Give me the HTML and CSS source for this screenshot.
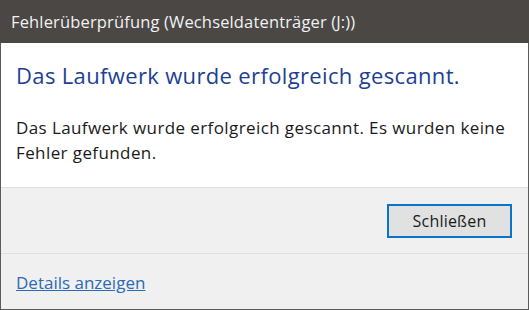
FILE: index.html
```html
<!DOCTYPE html>
<html lang="de">
<head>
<meta charset="utf-8">
<title>Fehlerüberprüfung</title>
<link rel="stylesheet" href="styles.css">
</head>
<body>
<div class="window">
  <div class="titlebar">Fehlerüberprüfung (Wechseldatenträger (J:))</div>
  <div class="content">
    <div class="instruction">Das Laufwerk wurde erfolgreich gescannt.</div>
    <div class="message">Das Laufwerk wurde erfolgreich gescannt. Es wurden keine Fehler gefunden.</div>
  </div>
  <div class="buttons">
    <button class="btn">Schließen</button>
  </div>
  <div class="footer">
    <a class="link" href="#">Details anzeigen</a>
  </div>
</div>
</body>
</html>
```
FILE: styles.css
```css
html, body {
  margin: 0;
  padding: 0;
  background: #f0f0f0;
}
body {
  font-family: "Open Sans", "Noto Sans", "Liberation Sans", sans-serif;
}
.window {
  width: 529px;
  height: 310px;
  box-sizing: border-box;
  border: 1px solid #5b5b5b;
  border-top: none;
  display: flex;
  flex-direction: column;
  background: #f0f0f0;
}
.titlebar {
  height: 43px;
  background: #4a4745;
  color: #f2f2f2;
  font-size: 16.5px;
  line-height: 43px;
  padding-left: 11px;
  margin: 0 -1px;
  letter-spacing: 0.15px;
}
.content {
  background: #ffffff;
  height: 144px;
  padding: 0 8px 0 15px;
  border-bottom: 1px solid #dfdfdf;
}
.instruction {
  color: #1c3f94;
  font-size: 22px;
  margin-top: 17px;
  line-height: 30px;
  letter-spacing: 0.35px;
}
.message {
  color: #1a1a1a;
  font-size: 17px;
  line-height: 25px;
  margin-top: 25px;
  letter-spacing: 0.4px;
}
.buttons {
  height: 66px;
  display: flex;
  justify-content: flex-end;
  align-items: flex-start;
  padding: 16px 16px 0 0;
  box-sizing: border-box;
  border-bottom: 1px solid #dfdfdf;
}
.btn {
  width: 125px;
  height: 34px;
  border: 2px solid #0a74c9;
  background: #e1e1e1;
  font-family: inherit;
  font-size: 16px;
  letter-spacing: 0.2px;
  color: #1a1a1a;
  padding: 0;
}
.footer {
  flex: 1;
  padding: 17px 15px 0;
}
.link {
  color: #2a6ab8;
  font-size: 17px;
  text-decoration: underline;
  letter-spacing: 0;
}
```
